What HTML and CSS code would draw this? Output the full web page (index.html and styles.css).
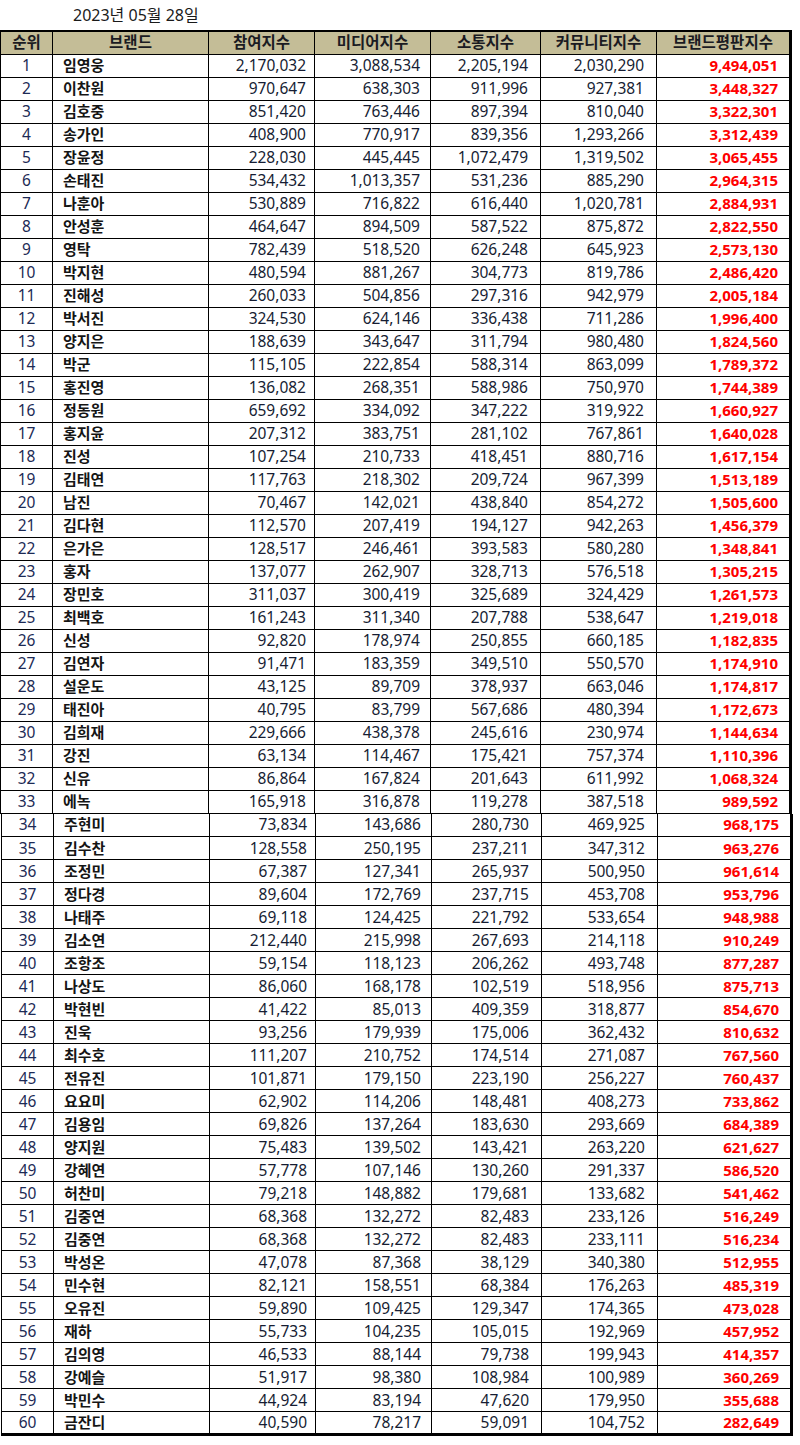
FILE: index.html
```html
<!DOCTYPE html>
<html lang="ko">
<head>
<meta charset="utf-8">
<link rel="stylesheet" href="styles.css">
</head>
<body>
<div class="date">2023년 05월 28일</div>
<table class="tbl tbl-a">
<colgroup><col class="c1"><col class="c2"><col class="c3"><col class="c4"><col class="c5"><col class="c6"><col class="c7"></colgroup>
<thead>
<tr><th>순위</th><th>브랜드</th><th>참여지수</th><th>미디어지수</th><th>소통지수</th><th>커뮤니티지수</th><th>브랜드평판지수</th></tr>
</thead>
<tbody>
<tr><td>1</td><td>임영웅</td><td>2,170,032</td><td>3,088,534</td><td>2,205,194</td><td>2,030,290</td><td>9,494,051</td></tr>
<tr><td>2</td><td>이찬원</td><td>970,647</td><td>638,303</td><td>911,996</td><td>927,381</td><td>3,448,327</td></tr>
<tr><td>3</td><td>김호중</td><td>851,420</td><td>763,446</td><td>897,394</td><td>810,040</td><td>3,322,301</td></tr>
<tr><td>4</td><td>송가인</td><td>408,900</td><td>770,917</td><td>839,356</td><td>1,293,266</td><td>3,312,439</td></tr>
<tr><td>5</td><td>장윤정</td><td>228,030</td><td>445,445</td><td>1,072,479</td><td>1,319,502</td><td>3,065,455</td></tr>
<tr><td>6</td><td>손태진</td><td>534,432</td><td>1,013,357</td><td>531,236</td><td>885,290</td><td>2,964,315</td></tr>
<tr><td>7</td><td>나훈아</td><td>530,889</td><td>716,822</td><td>616,440</td><td>1,020,781</td><td>2,884,931</td></tr>
<tr><td>8</td><td>안성훈</td><td>464,647</td><td>894,509</td><td>587,522</td><td>875,872</td><td>2,822,550</td></tr>
<tr><td>9</td><td>영탁</td><td>782,439</td><td>518,520</td><td>626,248</td><td>645,923</td><td>2,573,130</td></tr>
<tr><td>10</td><td>박지현</td><td>480,594</td><td>881,267</td><td>304,773</td><td>819,786</td><td>2,486,420</td></tr>
<tr><td>11</td><td>진해성</td><td>260,033</td><td>504,856</td><td>297,316</td><td>942,979</td><td>2,005,184</td></tr>
<tr><td>12</td><td>박서진</td><td>324,530</td><td>624,146</td><td>336,438</td><td>711,286</td><td>1,996,400</td></tr>
<tr><td>13</td><td>양지은</td><td>188,639</td><td>343,647</td><td>311,794</td><td>980,480</td><td>1,824,560</td></tr>
<tr><td>14</td><td>박군</td><td>115,105</td><td>222,854</td><td>588,314</td><td>863,099</td><td>1,789,372</td></tr>
<tr><td>15</td><td>홍진영</td><td>136,082</td><td>268,351</td><td>588,986</td><td>750,970</td><td>1,744,389</td></tr>
<tr><td>16</td><td>정동원</td><td>659,692</td><td>334,092</td><td>347,222</td><td>319,922</td><td>1,660,927</td></tr>
<tr><td>17</td><td>홍지윤</td><td>207,312</td><td>383,751</td><td>281,102</td><td>767,861</td><td>1,640,028</td></tr>
<tr><td>18</td><td>진성</td><td>107,254</td><td>210,733</td><td>418,451</td><td>880,716</td><td>1,617,154</td></tr>
<tr><td>19</td><td>김태연</td><td>117,763</td><td>218,302</td><td>209,724</td><td>967,399</td><td>1,513,189</td></tr>
<tr><td>20</td><td>남진</td><td>70,467</td><td>142,021</td><td>438,840</td><td>854,272</td><td>1,505,600</td></tr>
<tr><td>21</td><td>김다현</td><td>112,570</td><td>207,419</td><td>194,127</td><td>942,263</td><td>1,456,379</td></tr>
<tr><td>22</td><td>은가은</td><td>128,517</td><td>246,461</td><td>393,583</td><td>580,280</td><td>1,348,841</td></tr>
<tr><td>23</td><td>홍자</td><td>137,077</td><td>262,907</td><td>328,713</td><td>576,518</td><td>1,305,215</td></tr>
<tr><td>24</td><td>장민호</td><td>311,037</td><td>300,419</td><td>325,689</td><td>324,429</td><td>1,261,573</td></tr>
<tr><td>25</td><td>최백호</td><td>161,243</td><td>311,340</td><td>207,788</td><td>538,647</td><td>1,219,018</td></tr>
<tr><td>26</td><td>신성</td><td>92,820</td><td>178,974</td><td>250,855</td><td>660,185</td><td>1,182,835</td></tr>
<tr><td>27</td><td>김연자</td><td>91,471</td><td>183,359</td><td>349,510</td><td>550,570</td><td>1,174,910</td></tr>
<tr><td>28</td><td>설운도</td><td>43,125</td><td>89,709</td><td>378,937</td><td>663,046</td><td>1,174,817</td></tr>
<tr><td>29</td><td>태진아</td><td>40,795</td><td>83,799</td><td>567,686</td><td>480,394</td><td>1,172,673</td></tr>
<tr><td>30</td><td>김희재</td><td>229,666</td><td>438,378</td><td>245,616</td><td>230,974</td><td>1,144,634</td></tr>
<tr><td>31</td><td>강진</td><td>63,134</td><td>114,467</td><td>175,421</td><td>757,374</td><td>1,110,396</td></tr>
<tr><td>32</td><td>신유</td><td>86,864</td><td>167,824</td><td>201,643</td><td>611,992</td><td>1,068,324</td></tr>
<tr><td>33</td><td>에녹</td><td>165,918</td><td>316,878</td><td>119,278</td><td>387,518</td><td>989,592</td></tr>
</tbody>
</table>
<table class="tbl tbl-b">
<colgroup><col class="c1"><col class="c2"><col class="c3"><col class="c4"><col class="c5"><col class="c6"><col class="c7"></colgroup>
<tbody>
<tr><td>34</td><td>주현미</td><td>73,834</td><td>143,686</td><td>280,730</td><td>469,925</td><td>968,175</td></tr>
<tr><td>35</td><td>김수찬</td><td>128,558</td><td>250,195</td><td>237,211</td><td>347,312</td><td>963,276</td></tr>
<tr><td>36</td><td>조정민</td><td>67,387</td><td>127,341</td><td>265,937</td><td>500,950</td><td>961,614</td></tr>
<tr><td>37</td><td>정다경</td><td>89,604</td><td>172,769</td><td>237,715</td><td>453,708</td><td>953,796</td></tr>
<tr><td>38</td><td>나태주</td><td>69,118</td><td>124,425</td><td>221,792</td><td>533,654</td><td>948,988</td></tr>
<tr><td>39</td><td>김소연</td><td>212,440</td><td>215,998</td><td>267,693</td><td>214,118</td><td>910,249</td></tr>
<tr><td>40</td><td>조항조</td><td>59,154</td><td>118,123</td><td>206,262</td><td>493,748</td><td>877,287</td></tr>
<tr><td>41</td><td>나상도</td><td>86,060</td><td>168,178</td><td>102,519</td><td>518,956</td><td>875,713</td></tr>
<tr><td>42</td><td>박현빈</td><td>41,422</td><td>85,013</td><td>409,359</td><td>318,877</td><td>854,670</td></tr>
<tr><td>43</td><td>진욱</td><td>93,256</td><td>179,939</td><td>175,006</td><td>362,432</td><td>810,632</td></tr>
<tr><td>44</td><td>최수호</td><td>111,207</td><td>210,752</td><td>174,514</td><td>271,087</td><td>767,560</td></tr>
<tr><td>45</td><td>전유진</td><td>101,871</td><td>179,150</td><td>223,190</td><td>256,227</td><td>760,437</td></tr>
<tr><td>46</td><td>요요미</td><td>62,902</td><td>114,206</td><td>148,481</td><td>408,273</td><td>733,862</td></tr>
<tr><td>47</td><td>김용임</td><td>69,826</td><td>137,264</td><td>183,630</td><td>293,669</td><td>684,389</td></tr>
<tr><td>48</td><td>양지원</td><td>75,483</td><td>139,502</td><td>143,421</td><td>263,220</td><td>621,627</td></tr>
<tr><td>49</td><td>강혜연</td><td>57,778</td><td>107,146</td><td>130,260</td><td>291,337</td><td>586,520</td></tr>
<tr><td>50</td><td>허찬미</td><td>79,218</td><td>148,882</td><td>179,681</td><td>133,682</td><td>541,462</td></tr>
<tr><td>51</td><td>김중연</td><td>68,368</td><td>132,272</td><td>82,483</td><td>233,126</td><td>516,249</td></tr>
<tr><td>52</td><td>김중연</td><td>68,368</td><td>132,272</td><td>82,483</td><td>233,111</td><td>516,234</td></tr>
<tr><td>53</td><td>박성온</td><td>47,078</td><td>87,368</td><td>38,129</td><td>340,380</td><td>512,955</td></tr>
<tr><td>54</td><td>민수현</td><td>82,121</td><td>158,551</td><td>68,384</td><td>176,263</td><td>485,319</td></tr>
<tr><td>55</td><td>오유진</td><td>59,890</td><td>109,425</td><td>129,347</td><td>174,365</td><td>473,028</td></tr>
<tr><td>56</td><td>재하</td><td>55,733</td><td>104,235</td><td>105,015</td><td>192,969</td><td>457,952</td></tr>
<tr><td>57</td><td>김의영</td><td>46,533</td><td>88,144</td><td>79,738</td><td>199,943</td><td>414,357</td></tr>
<tr><td>58</td><td>강예슬</td><td>51,917</td><td>98,380</td><td>108,984</td><td>100,989</td><td>360,269</td></tr>
<tr><td>59</td><td>박민수</td><td>44,924</td><td>83,194</td><td>47,620</td><td>179,950</td><td>355,688</td></tr>
<tr><td>60</td><td>금잔디</td><td>40,590</td><td>78,217</td><td>59,091</td><td>104,752</td><td>282,649</td></tr>
</tbody>
</table>
</body>
</html>
```
FILE: styles.css
```css
html, body {
  margin: 0;
  padding: 0;
  background: #ffffff;
}
body {
  font-family: "Noto Sans", "Noto Sans CJK KR", sans-serif;
  color: #161d33;
  width: 800px;
}
.date {
  height: 30px;
  box-sizing: border-box;
  padding-left: 73px;
  padding-top: 5px;
  font-size: 16px;
  line-height: 20px;
  color: #1a1a1a;
}
.tbl {
  border-collapse: collapse;
  table-layout: fixed;
  width: 790px;
}
.tbl-b {
  width: 791px;
  margin-left: 1px;
}
.c1 { width: 52px; }
.c2 { width: 156px; }
.c3 { width: 106px; }
.c4 { width: 116px; }
.c5 { width: 110px; }
.c6 { width: 116px; }
.c7 { width: 134px; }
.tbl th, .tbl td {
  height: 23px;
  padding: 0;
  border: 1px solid #000;
  font-size: 15.5px;
  line-height: 21px;
  white-space: nowrap;
  overflow: hidden;
  box-sizing: border-box;
}
.tbl th {
  background: #c4bd97;
  font-weight: 700;
  font-size: 15.5px;
  text-align: center;
  color: #1b1b22;
  border-top: 2px solid #000;
}
.tbl td:first-child,
.tbl th:first-child { border-left: 1px solid #000; }
.tbl td:nth-child(1) { text-align: center; color: #1c2a55; }
.tbl td:nth-child(2) {
  text-align: left;
  padding-left: 10px;
  font-weight: 700;
  font-size: 15px;
  color: #151515;
}
.tbl td:nth-child(3) { text-align: right; padding-right: 8px; }
.tbl td:nth-child(4) { text-align: right; padding-right: 10px; }
.tbl td:nth-child(5) { text-align: right; padding-right: 12px; }
.tbl td:nth-child(6) { text-align: right; padding-right: 12px; }
.tbl td:nth-child(7) {
  text-align: right;
  padding-right: 11px;
  color: #ff0000;
  font-weight: 700;
  font-size: 15px;
}
.tbl th:last-child,
.tbl td:last-child { border-right: 3px solid #000; }
.tbl-b tr:first-child td { border-top: none; }
.tbl-b tr:last-child td { border-bottom: 3px solid #000; }
```
